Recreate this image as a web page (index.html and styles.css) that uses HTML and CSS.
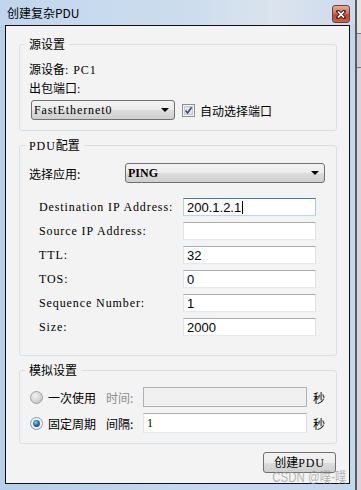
FILE: index.html
```html
<!DOCTYPE html>
<html lang="zh-CN">
<head>
    <meta charset="UTF-8">
    <meta name="viewport" content="width=device-width, initial-scale=1.0">
    <title>创建复杂PDU</title>
    <link rel="stylesheet" href="styles.css">
</head>
<body>
    <div class="screen">
        <div class="window">
            <div class="titlebar">
                <span class="title">创建复杂PDU</span>
                <button type="button" class="close">
                    <svg width="10" height="9" viewBox="0 0 10 9">
                        <path d="M2 1.5 L8 7.5 M8 1.5 L2 7.5" stroke="#3a2a2a" stroke-width="3.6" stroke-linecap="square"/>
                        <path d="M2 1.5 L8 7.5 M8 1.5 L2 7.5" stroke="#fff" stroke-width="1.7"/>
                    </svg>
                </button>
            </div>
            <div class="client">
                <fieldset class="group group-src">
                    <legend>源设置</legend>
                    <div class="src-line first">源设备<span class="mono">: PC1</span></div>
                    <div class="src-line">出包端口<span class="mono">:</span></div>
                    <div class="port-row">
                        <div class="select select-port">
                            <span class="mono">FastEthernet0</span>
                            <span class="arrow"></span>
                        </div>
                        <label class="check">
                            <svg width="13" height="13" viewBox="0 0 13 13">
                                <rect x="0.5" y="0.5" width="12" height="12" fill="#f4f4f4" stroke="#8e8f8f"/>
                                <rect x="2.5" y="2.5" width="8" height="8" fill="#dfe3ea" stroke="#c3c8d1"/>
                                <path d="M3.6 6.4 L5.6 9 L9.6 3.2" fill="none" stroke="#36498a" stroke-width="1.6"/>
                            </svg>
                            自动选择端口
                        </label>
                    </div>
                </fieldset>

                <fieldset class="group group-pdu">
                    <legend><span class="mono">PDU</span>配置</legend>
                    <div class="app-row">
                        <span class="app-label">选择应用:</span>
                        <div class="select select-app">
                            <span class="mono bold">PING</span>
                            <span class="arrow"></span>
                        </div>
                    </div>
                    <div class="fields">
                        <div class="field">
                            <span class="mono field-label">Destination IP Address:</span>
                            <div class="text focus">200.1.2.1<span class="caret"></span></div>
                        </div>
                        <div class="field">
                            <span class="mono field-label">Source IP Address:</span>
                            <div class="text"></div>
                        </div>
                        <div class="field">
                            <span class="mono field-label">TTL:</span>
                            <div class="text">32</div>
                        </div>
                        <div class="field">
                            <span class="mono field-label">TOS:</span>
                            <div class="text">0</div>
                        </div>
                        <div class="field">
                            <span class="mono field-label">Sequence Number:</span>
                            <div class="text">1</div>
                        </div>
                        <div class="field">
                            <span class="mono field-label">Size:</span>
                            <div class="text">2000</div>
                        </div>
                    </div>
                </fieldset>

                <fieldset class="group group-sim">
                    <legend>模拟设置</legend>
                    <div class="sim-rows">
                        <div class="sim-row">
                            <svg class="radio" width="13" height="13" viewBox="0 0 13 13">
                                <defs>
                                    <radialGradient id="ru" cx="0.4" cy="0.35" r="0.75">
                                        <stop offset="0" stop-color="#f2f2f2"/>
                                        <stop offset="0.6" stop-color="#d6d6d6"/>
                                        <stop offset="1" stop-color="#b8b8b8"/>
                                    </radialGradient>
                                </defs>
                                <circle cx="6.5" cy="6.5" r="6" fill="url(#ru)" stroke="#a2a2a2"/>
                            </svg>
                            <span class="opt">一次使用</span>
                            <span class="sim-label disabled">时间:</span>
                            <div class="text wide disabled-box"></div>
                            <span class="unit">秒</span>
                        </div>
                        <div class="sim-row">
                            <svg class="radio" width="13" height="13" viewBox="0 0 13 13">
                                <defs>
                                    <radialGradient id="rc" cx="0.4" cy="0.35" r="0.7">
                                        <stop offset="0" stop-color="#8fd0f6"/>
                                        <stop offset="0.5" stop-color="#2a7fc4"/>
                                        <stop offset="1" stop-color="#0c3f7a"/>
                                    </radialGradient>
                                </defs>
                                <circle cx="6.5" cy="6.5" r="6" fill="#eef1f5" stroke="#8d9aab"/>
                                <circle cx="6.5" cy="6.5" r="3.4" fill="url(#rc)"/>
                            </svg>
                            <span class="opt">固定周期</span>
                            <span class="sim-label">间隔:</span>
                            <div class="text wide"><span class="mono">1</span></div>
                            <span class="unit">秒</span>
                        </div>
                    </div>
                </fieldset>

                <div class="footer">
                    <button type="button" class="btn">创建<span class="mono">PDU</span></button>
                </div>
                <div class="watermark">CSDN @噗-噗</div>
            </div>
        </div>
        <div class="backdrop"></div>
    </div>
</body>
</html>
```

FILE: styles.css
```css
* {
    box-sizing: border-box;
}
body {
    margin: 0;
    font-family: "Noto Sans CJK SC", "Liberation Sans", sans-serif;
    font-size: 12px;
    color: #000;
}
.screen {
    display: flex;
    width: 361px;
    height: 490px;
}
.window {
    width: 355px;
    height: 490px;
    display: flex;
    flex-direction: column;
    background: linear-gradient(90deg, #b8cfe9, #c6d9ee 60%, #c3d6eb);
}
.titlebar {
    height: 25px;
    display: flex;
    justify-content: space-between;
    align-items: flex-start;
    padding: 5px 5px 0 7px;
    background: linear-gradient(90deg, #c1d6ee 0%, #cddded 55%, #dbe4ee 78%, #cbdaeb 100%);
}
.title {
    line-height: 16px;
}
.close {
    width: 18px;
    height: 18px;
    padding: 0;
    display: flex;
    align-items: center;
    justify-content: center;
    border: 1px solid #5e4642;
    border-radius: 3px;
    background: linear-gradient(#eba897, #d8735c 45%, #c6442a 55%, #d4603f);
}
.client {
    position: relative;
    height: 459px;
    margin: 0 5px 6px;
    padding-top: 10px;
    border: 1px solid #111;
    background: #f3f3f3;
}
/* the dialog's Latin labels use a narrow serif face */
.mono {
    font-family: "Liberation Serif", serif;
    letter-spacing: 0.9px;
}
.bold {
    font-weight: bold;
    letter-spacing: 0;
}
.group {
    min-width: 0;
    margin: 0 12px 0 13px;
    padding: 0 0 10px 9px;
    border: 1px solid #d5dfe5;
    border-radius: 3px;
}
.group + .group {
    margin-top: 6px;
}
.group legend {
    margin-left: -4px;
    padding: 0 4px;
    line-height: 16px;
}
.src-line {
    line-height: 18px;
}
.src-line.first {
    margin-top: 8px;
}
.port-row {
    display: flex;
    align-items: center;
    margin-top: 2px;
    padding-left: 2px;
}
.select {
    display: flex;
    align-items: center;
    justify-content: space-between;
    height: 20px;
    padding: 0 5px 0 2px;
    border: 1px solid #707070;
    border-radius: 3px;
    background: linear-gradient(#f3f3f3 0%, #ebebeb 50%, #dddddd 50%, #cfcfcf 100%);
}
.select-port {
    width: 144px;
}
.select-app {
    width: 200px;
}
.arrow {
    width: 0;
    height: 0;
    border-left: 4px solid transparent;
    border-right: 4px solid transparent;
    border-top: 4px solid #000;
}
.check {
    display: flex;
    align-items: center;
    gap: 5px;
    margin-left: 7px;
}
.app-row {
    display: flex;
    align-items: center;
    margin-top: 9px;
}
.app-label {
    width: 96px;
}
.group-pdu {
    padding-bottom: 19px;
}
.fields {
    display: flex;
    flex-direction: column;
    gap: 6px;
    margin-top: 15px;
    padding-left: 10px;
}
.field {
    display: flex;
    align-items: center;
    height: 18px;
}
.field-label {
    width: 144px;
}
.text {
    display: flex;
    align-items: center;
    width: 133px;
    height: 18px;
    padding: 0 3px;
    border: 1px solid;
    border-color: #abadb3 #dbdfe6 #e3e9ef #e2e3ea;
    background: #fff;
    font-family: "Liberation Sans", sans-serif;
    font-size: 13px;
}
.text.focus {
    border-color: #3d7bad #a4c9e3 #b7d9ed #b5cfe7;
}
.caret {
    width: 1px;
    height: 13px;
    margin-left: 1px;
    background: #000;
}
.sim-rows {
    display: flex;
    flex-direction: column;
    gap: 6px;
    margin-top: 9px;
}
.sim-row {
    display: flex;
    align-items: center;
    height: 20px;
}
.radio {
    margin-left: 1px;
}
.opt {
    width: 48px;
    margin-left: 5px;
}
.sim-label {
    width: 37px;
    margin-left: 10px;
}
.disabled {
    color: #8d8d8d;
}
.text.wide {
    width: 164px;
    height: 20px;
    font-size: 12px;
}
.text.disabled-box {
    border-color: #adb2b5;
    background: #f0f0f0;
}
.unit {
    margin-left: 6px;
}
.footer {
    display: flex;
    justify-content: flex-end;
    margin-top: 8px;
    padding-right: 13px;
}
.btn {
    width: 73px;
    height: 21px;
    padding: 0;
    border: 1px solid #707070;
    border-radius: 3px;
    background: linear-gradient(#f3f3f3 0%, #ebebeb 50%, #dddddd 50%, #cfcfcf 100%);
    font-family: inherit;
    font-size: 12px;
    line-height: 15px;
    color: #000;
}
.watermark {
    position: absolute;
    right: 3px;
    bottom: 0;
    font-family: "Liberation Sans", "Noto Sans CJK SC", sans-serif;
    font-size: 14px;
    line-height: 11px;
    color: rgba(150, 150, 150, 0.7);
    transform: scaleX(0.82);
    transform-origin: right;
    white-space: nowrap;
}
.backdrop {
    flex: 1;
    border-left: 2px solid #5c5c5c;
    background:
        linear-gradient(#e4e4e4 0 33px, #7a7a7a 33px 34px, #d0d0d0 34px 67px, #7a7a7a 67px 68px, #d6d6d6 68px);
}
```
